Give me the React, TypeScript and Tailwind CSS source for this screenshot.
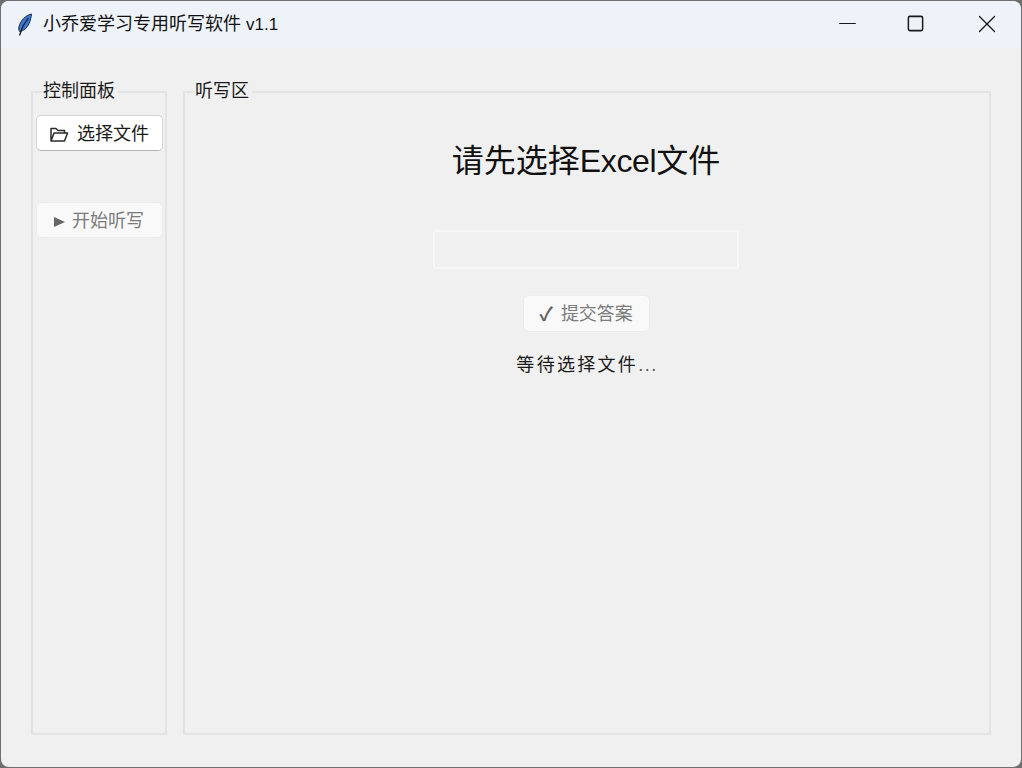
import { Minus, Square, X } from "lucide-react";

const font = { fontFamily: '"Liberation Sans", "Noto Sans CJK SC", sans-serif' };

function Feather() {
  return (
    <svg width="16" height="24" viewBox="0 0 16 24" aria-hidden>
      <path d="M14.500 1C9 2 3.500 7.500 2 13.500c-.5 2.200-.3 4 .6 5 4-.5 7.500-3.600 9.600-8.200 1.300-3 2-6.300 2.300-9.300z" fill="#3a7bd0" stroke="#1d2b45" strokeWidth="1" />
      <path d="M11.500 5 6 13 2.500 22.500" fill="none" stroke="#10182a" strokeWidth="1.300" />
    </svg>
  );
}

function Group({ title, className, children }: { title: string; className: string; children?: React.ReactNode }) {
  return (
    <section className={`relative border-2 border-[#e3e3e3] ${className}`}>
      <span className="absolute -top-[14px] left-[9px] bg-[#f0f0f0] pl-[1px] pr-[3px] text-[18px] leading-[24px] text-[#1a1a1a]">
        {title}
      </span>
      {children}
    </section>
  );
}

export default function App() {
  return (
    <div className="h-[768px] w-[1022px] overflow-hidden bg-[#6f6f72] pl-[1px] pt-[1px]" style={font}>
      <div className="flex h-[766px] w-[1020px] flex-col overflow-hidden rounded-[8px] bg-[#f0f0f0]">
        <header className="flex h-[47px] shrink-0 items-center bg-[#eef3f9]">
          <div className="ml-[16px] flex w-[26px] shrink-0 items-center">
            <Feather />
          </div>
          <span className="text-[18px] leading-[24px] text-[#111]">
            小乔爱学习专用听写软件 <span className="text-[17px]">v1.1</span>
          </span>
          <div className="mb-[2px] ml-auto flex items-center text-[#1a1a1a]">
            <span className="flex w-[62px] justify-center"><Minus size={27} strokeWidth={1.100} /></span>
            <span className="flex w-[75px] justify-center"><Square size={19} strokeWidth={1.900} /></span>
            <span className="flex w-[68px] justify-center"><X size={30} strokeWidth={1.100} /></span>
          </div>
        </header>

        <main className="flex flex-1 gap-[16px] pb-[32px] pl-[30px] pr-[30px] pt-[43px]">
          <Group title="控制面板" className="flex w-[136px] shrink-0 flex-col items-center">
            <button className="mt-[22px] flex h-[36px] w-[127px] items-center justify-center gap-[8px] rounded-[5px] border border-[#d4d4d4] border-b-[#b5b5b5] bg-white pt-[3px] text-[18px] text-[#1a1a1a]">
              <svg width="20" height="17" viewBox="0 0 20 17" fill="none" stroke="#2b2b2b" strokeWidth="1.500" aria-hidden>
                <path d="M2 15V2.500h5l2 2h6.500V7M2 15h13.500L18.500 7H5L2 15z" strokeLinejoin="round" />
              </svg>
              选择文件
            </button>
            <button disabled className="mt-[51px] flex h-[36px] w-[127px] items-center justify-center gap-[7px] rounded-[5px] border border-[#ececec] bg-[#f9f9f9] pt-[3px] text-[18px] text-[#7b7b7b]">
              <svg width="11" height="10" viewBox="0 0 11 10" aria-hidden>
                <path d="M0 0l11 5-11 5z" fill="#666" />
              </svg>
              开始听写
            </button>
          </Group>

          <Group title="听写区" className="flex flex-1 flex-col items-center">
            <h1 className="mr-[2px] mt-[47px] text-[32px] font-normal leading-[42px] text-[#111]">
              请先选择<span className="tracking-[-0.4px]">Excel</span>文件
            </h1>
            <input disabled className="mr-[2px] mt-[48px] h-[39px] w-[306px] rounded-[2px] border-2 border-[#f6f6f6] bg-[#f0f0f0]" />
            <button disabled className="mr-[2px] mt-[26px] flex h-[37px] w-[127px] items-center justify-center gap-[8px] rounded-[5px] border border-[#ececec] bg-[#f9f9f9] pt-[1px] text-[18px] text-[#7b7b7b]">
              <span className="text-[19px] font-bold leading-none text-[#666]">✓</span>
              提交答案
            </button>
            <p className="mt-[20px] text-[18px] leading-[26px] tracking-[2.300px] text-[#1a1a1a]">
              等待选择文件<span className="tracking-[1.500px] text-[#555]">...</span>
            </p>
          </Group>
        </main>
      </div>
    </div>
  );
}
